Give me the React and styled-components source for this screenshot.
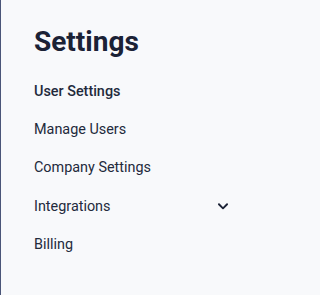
import React from "react";
import styled, { createGlobalStyle } from "styled-components";

const Global = createGlobalStyle`
  html, body { margin: 0; padding: 0; background: #f8f9fb; }
  body { font-family: Roboto, "Noto Sans", sans-serif; }
`;

const Sidebar = styled.nav`
  box-sizing: border-box;
  width: 250px;
  height: 295px;
  border-left: 1px solid #4a5578;
  background: #f8f9fb;
  padding: 25px 20px 0 33px;
  display: flex;
  flex-direction: column;
`;

const Title = styled.h1`
  margin: 0 0 13px;
  font-size: 28px;
  line-height: 34px;
  font-weight: 700;
  color: #1b2236;
`;

const Item = styled.div`
  display: flex;
  align-items: center;
  justify-content: space-between;
  height: 38.3px;
  font-size: 14.4px;
  font-weight: ${(p) => (p.$active ? 500 : 400)};
  color: #232a3c;
`;

const Chevron = () => (
  <svg width="14" height="14" viewBox="0 0 24 24" fill="none" stroke="#1b2236" strokeWidth="3.2" strokeLinecap="round" strokeLinejoin="round">
    <path d="M5 9l7 7 7-7" />
  </svg>
);

export default function App() {
  return (
    <>
      <Global />
      <Sidebar>
        <Title>Settings</Title>
        <Item $active>User Settings</Item>
        <Item>Manage Users</Item>
        <Item>Company Settings</Item>
        <Item>
          Integrations
          <Chevron />
        </Item>
        <Item>Billing</Item>
      </Sidebar>
    </>
  );
}
